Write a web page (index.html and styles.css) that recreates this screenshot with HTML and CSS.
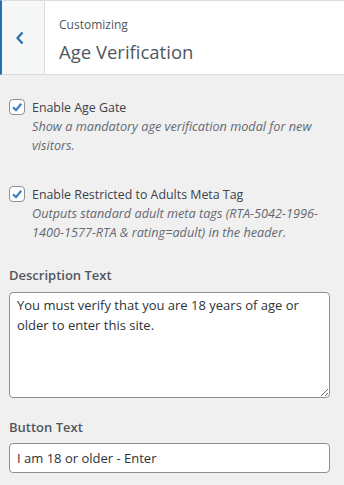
FILE: index.html
```html
<!DOCTYPE html>
<html lang="en">
<head>
  <meta charset="UTF-8">
  <meta name="viewport" content="width=device-width, initial-scale=1.0">
  <title>Customizing - Age Verification</title>
  <link rel="stylesheet" href="styles.css">
</head>
<body>
  <!-- Cabecera de la sección -->
  <div class="section-header">
    <button class="back-button" aria-label="Back">
      <svg width="10" height="14" viewBox="0 0 10 14">
        <path d="M7.5 1.5 L2.5 7 L7.5 12.5" fill="none" stroke="#2271b1" stroke-width="2.2"/>
      </svg>
    </button>
    <div class="section-title">
      <span class="section-crumb">Customizing</span>
      <h3>Age Verification</h3>
    </div>
  </div>

  <!-- Controles -->
  <div class="controls">
    <div class="control control-checkbox">
      <span class="checkbox">
        <svg width="14" height="14" viewBox="0 0 14 14">
          <path d="M3 7.2 L6 10.2 L11.2 3.8" fill="none" stroke="#3582c4" stroke-width="2.2"/>
        </svg>
      </span>
      <div class="checkbox-text">
        <span class="checkbox-label">Enable Age Gate</span>
        <span class="description">Show a mandatory age verification modal for new visitors.</span>
      </div>
    </div>

    <div class="control control-checkbox">
      <span class="checkbox">
        <svg width="14" height="14" viewBox="0 0 14 14">
          <path d="M3 7.2 L6 10.2 L11.2 3.8" fill="none" stroke="#3582c4" stroke-width="2.2"/>
        </svg>
      </span>
      <div class="checkbox-text">
        <span class="checkbox-label">Enable Restricted to Adults Meta Tag</span>
        <span class="description">Outputs standard adult meta tags (RTA-5042-1996-1400-1577-RTA &amp; rating=adult) in the header.</span>
      </div>
    </div>

    <div class="control control-text">
      <label class="control-title">Description Text</label>
      <textarea class="field field-area">You must verify that you are 18 years of age or older to enter this site.</textarea>
    </div>

    <div class="control control-text">
      <label class="control-title">Button Text</label>
      <input class="field field-input" type="text" value="I am 18 or older - Enter">
    </div>
  </div>
</body>
</html>
```

FILE: styles.css
```css
/* Estilo global del panel */
html, body {
  margin: 0;
  padding: 0;
}
body {
  background-color: #f0f0f1;
  color: #3c434a;
  font-family: 'Open Sans', sans-serif;
  overflow: hidden;
}

/* Cabecera con botón de volver */
.section-header {
  display: flex;
  height: 73px;
  border-top: 1px solid #dcdcde;
  border-bottom: 1px solid #dcdcde;
  border-left: 2px solid #2271b1;
  background-color: #fff;
  margin-bottom: 23px;
}
.back-button {
  width: 43px;
  padding: 0 6px 0 0;
  border: none;
  border-right: 1px solid #dcdcde;
  background-color: #f6f7f7;
  display: flex;
  align-items: center;
  justify-content: center;
}
.section-title {
  padding: 15px 0 0 14px;
  color: #50575e;
}
.section-crumb {
  display: block;
  font-size: 12px;
  line-height: 18px;
}
.section-title h3 {
  margin: 5px 0 0;
  font-size: 18.5px;
  font-weight: 400;
  line-height: 26px;
}

/* Contenedor de controles */
.controls {
  padding: 0 14px 0 9px;
}

/* Casillas */
.control-checkbox {
  display: flex;
  gap: 7px;
  margin-bottom: 23px;
}
.control-checkbox + .control-checkbox {
  margin-top: 30px;
}
.checkbox {
  flex: none;
  width: 14px;
  height: 14px;
  border: 1px solid #8c8f94;
  border-radius: 4px;
  background-color: #fff;
  margin-top: 1px;
  display: flex;
}
.checkbox-text {
  line-height: 19px;
}
.checkbox-label {
  display: block;
  font-size: 12.4px;
}
.description {
  display: block;
  font-size: 12.7px;
  font-style: italic;
  color: #646970;
}

/* Campos de texto */
.control-text {
  margin-bottom: 19px;
}
.control-title {
  display: block;
  font-size: 13px;
  font-weight: 600;
  color: #50575e;
  line-height: 20px;
  margin-bottom: 7px;
}
.control-text + .control-text .control-title {
  margin-bottom: 6px;
}
.field {
  display: block;
  box-sizing: border-box;
  width: 100%;
  border: 1px solid #8c8f94;
  border-radius: 4px;
  background-color: #fff;
  color: #2c3338;
  font-family: 'Open Sans', sans-serif;
  font-size: 13px;
  margin: 0;
}
.field-area {
  height: 106px;
  padding: 2px 7px;
  line-height: 20px;
  resize: vertical;
}
.field-input {
  height: 30px;
  padding: 0 7px;
}
```
